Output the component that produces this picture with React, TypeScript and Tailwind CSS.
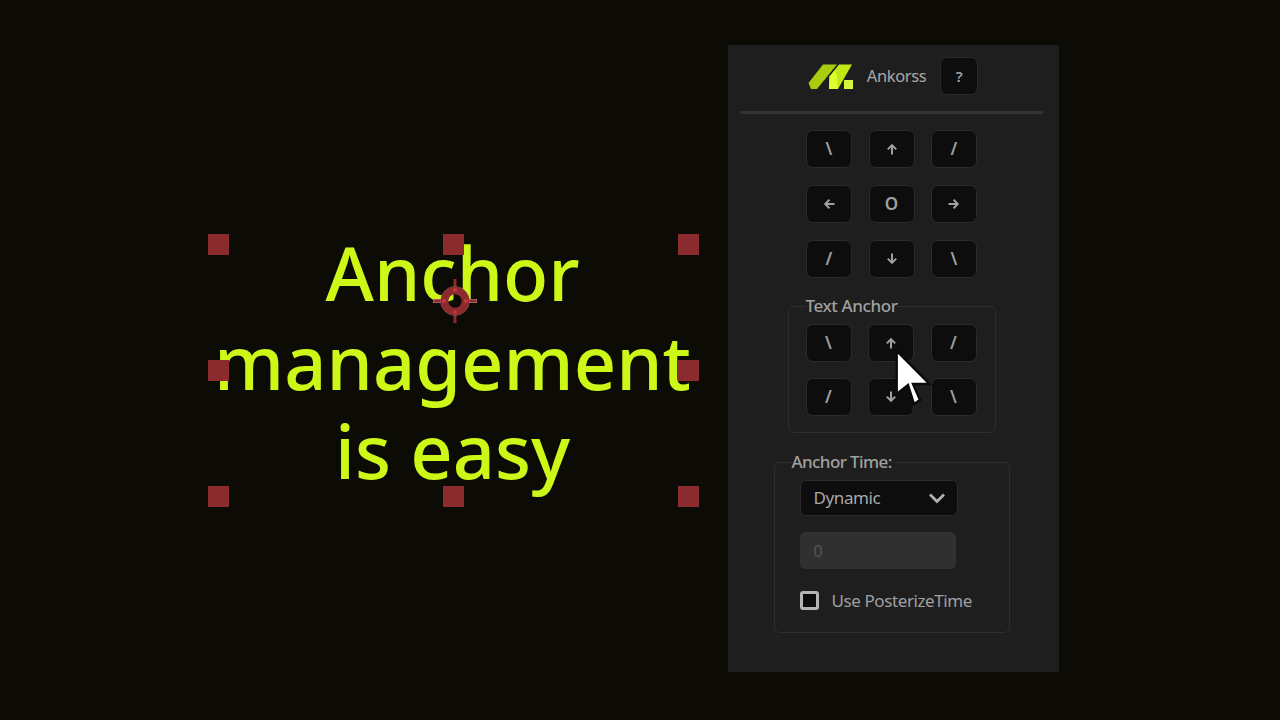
const font = "[font-family:'Noto_Sans','Open_Sans',sans-serif]";

function Arrow({ dir }: { dir: 'up' | 'down' | 'left' | 'right' }) {
  const rot = { up: 0, right: 90, down: 180, left: 270 }[dir];
  return (
    <svg width="14" height="14" viewBox="0 0 14 14" fill="none" stroke="#a0a0a0" strokeWidth="2" style={{ transform: `rotate(${rot}deg)` }}>
      <path d="M7 12.5V3.5M2.8 7.4 7 3.2l4.2 4.2" />
    </svg>
  );
}

function Key({ label, dir }: { label?: string; dir?: 'up' | 'down' | 'left' | 'right' }) {
  return (
    <button className="w-[46px] h-[38px] rounded-[7px] bg-[#0d0d0d] border border-[#2a2a2a] flex items-center justify-center text-[17px] font-semibold text-[#a0a0a0]">
      {dir ? <Arrow dir={dir} /> : label}
    </button>
  );
}

function Handle() {
  return <div className="w-[21px] h-[21px] bg-[#8b2b2d]" />;
}

function Row({ children, className = '' }: { children: React.ReactNode; className?: string }) {
  return <div className={`flex gap-[16.5px] justify-center ${className}`}>{children}</div>;
}

export default function App() {
  return (
    <div className={`w-[1280px] h-[720px] bg-[#0c0b06] flex overflow-hidden relative ${font}`}>
      <div className="relative w-[728px] h-full">
        <div className="absolute left-[207px] top-[228px] w-[491px] text-center text-[74px] font-medium leading-[89px] text-[#cdf716]">
          <div>Anchor</div>
          <div className="whitespace-nowrap">management</div>
          <div>is easy</div>
        </div>
        <div className="absolute left-[208px] top-[234px] w-[491px] h-[273px] grid grid-cols-[21px_21px_21px] grid-rows-[21px_21px_21px] justify-between content-between">
          <Handle /><Handle /><Handle />
          <Handle /><div /><Handle />
          <Handle /><Handle /><Handle />
        </div>
        <svg className="absolute left-[432px] top-[278px]" width="46" height="46" viewBox="0 0 46 46" fill="none">
          <path d="M1 23H9M37 23H45" stroke="#c98a8a" strokeWidth="4" />
          <path d="M1.5 23H9M37 23H44.5M23 1V9M23 37V45" stroke="#8b2b2d" strokeWidth="3" />
          <circle cx="23" cy="23" r="14.4" stroke="#b86a6c" strokeWidth="0.7" />
          <circle cx="23" cy="23" r="10.5" stroke="#8b2b2d" strokeWidth="7.6" />
          <circle cx="23" cy="12" r="2" fill="#c4373d" />
          <circle cx="23" cy="34" r="2" fill="#c4373d" />
          <circle cx="12" cy="23" r="2" fill="#c4373d" />
          <circle cx="34" cy="23" r="2" fill="#c4373d" />
        </svg>
      </div>

      <div className="w-[331px] h-[627px] mt-[45px] pr-[4px] bg-[#1e1e1e] flex flex-col items-center">
        <div className="flex items-center h-[38px] mt-[12px] pl-[3px]">
          <svg width="45" height="25" viewBox="0 0 45 25">
            <polygon points="0.5,19 15,0.5 29,0.5 9,25 3,25" fill="#a9cc0e" />
            <polygon points="21,25 21.5,12.5 31,0.5 44,0.5 30,25" fill="#c2e812" />
            <polygon points="21,25 21.5,12.5 27,6 29,14 30,25" fill="#dcff30" />
            <rect x="36" y="16" width="9" height="9" fill="#d8f53c" />
          </svg>
          <span className="ml-[14px] text-[16.5px] tracking-[-0.4px] text-[#a8a8a8]">Ankorss</span>
          <button className="ml-[14px] w-[38px] h-[38px] rounded-[7px] bg-[#0d0d0d] border border-[#2a2a2a] text-[15px] font-semibold text-[#a0a0a0]">?</button>
        </div>
        <div className="w-[303px] h-[3px] mt-[16px] bg-[#333333] rounded-full" />

        <div className="flex flex-col gap-[17px] mt-[16px]">
          <Row><Key label="\" /><Key dir="up" /><Key label="/" /></Row>
          <Row><Key dir="left" /><Key label="O" /><Key dir="right" /></Row>
          <Row><Key label="/" /><Key dir="down" /><Key label="\" /></Row>
        </div>

        <fieldset className="w-[208px] h-[136px] mt-[19px] border border-[#2e2e2e] rounded-[6px] pl-[17px] pt-0 flex flex-col">
          <legend className="ml-0 px-0 text-[17px] font-medium leading-[18px] tracking-[-0.4px] text-[#a0a0a0]">Text Anchor</legend>
          <div className="flex flex-col gap-[16px] mt-[9px]">
            <Row className="justify-start"><Key label="\" /><Key dir="up" /><Key label="/" /></Row>
            <Row className="justify-start"><Key label="/" /><Key dir="down" /><Key label="\" /></Row>
          </div>
        </fieldset>

        <fieldset className="w-[236px] h-[180px] mt-[20px] border border-[#2e2e2e] rounded-[6px] pl-[25px] flex flex-col items-start">
          <legend className="ml-[-8px] pl-0 pr-[2px] text-[17px] font-medium leading-[18px] tracking-[-0.6px] text-[#a0a0a0]">Anchor Time:</legend>
          <div className="w-[158px] h-[36px] mt-[9px] rounded-[6px] bg-[#0d0d0d] border border-[#2a2a2a] flex items-center justify-between pl-[13px] pr-[11px] text-[17px] tracking-[-0.4px] text-[#a8a8a8]">
            <span>Dynamic</span>
            <svg width="18" height="12" viewBox="0 0 18 12" fill="none" stroke="#b0b0b0" strokeWidth="2.8"><path d="M2 2.5 9 9.5l7-7" /></svg>
          </div>
          <div className="w-[156px] h-[37px] mt-[16px] rounded-[5px] bg-[#303030] flex items-center pl-[14px] text-[16px] text-[#555555]">0</div>
          <div className="flex items-center mt-[19px]">
            <div className="w-[19px] h-[19px] rounded-[3px] border-[3px] border-[#b4b4b4] bg-[#0d0d0d]" />
            <span className="ml-[13px] text-[17px] tracking-[-0.4px] text-[#a0a0a0]">Use PosterizeTime</span>
          </div>
        </fieldset>
      </div>

      <svg className="absolute left-[890px] top-[346px]" width="44" height="62" viewBox="0 0 44 62">
        <path d="M6.7 5V48L18 39L24 58L30 54L23 38L39.5 38Z" fill="#ffffff" stroke="#0a0a0a" strokeWidth="2.4" strokeLinejoin="miter" />
      </svg>
    </div>
  );
}
